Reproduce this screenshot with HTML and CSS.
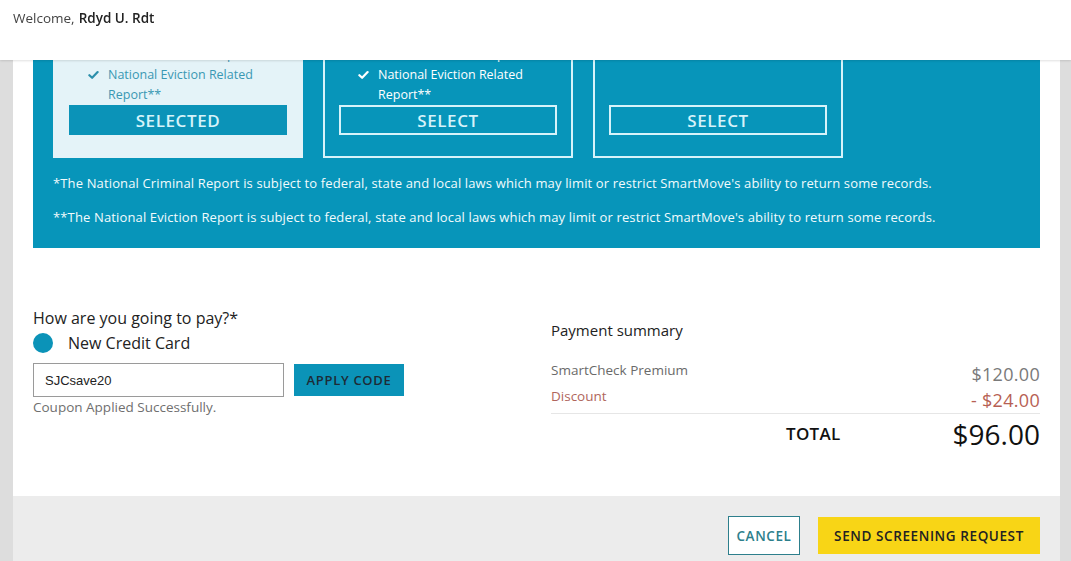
FILE: index.html
```html
<!DOCTYPE html>
<html lang="en">
<head>
<meta charset="utf-8">
<title>Screening request</title>
<link rel="stylesheet" href="styles.css">
</head>
<body>
<header class="topbar">
  <div class="welcome"><span>Welcome,</span><b>Rdyd U. Rdt</b></div>
</header>

<div class="page">
  <section class="plans">
    <div class="cards">
      <div class="card card-selected">
        <ul class="features">
          <li><svg class="check" viewBox="0 0 12 10"><path d="M1.5 5.2 L4.5 8 L10.5 1.8" /></svg><span>Credit Report &amp; Score</span></li>
          <li><svg class="check" viewBox="0 0 12 10"><path d="M1.5 5.2 L4.5 8 L10.5 1.8" /></svg><span>National Criminal Report*</span></li>
          <li><svg class="check" viewBox="0 0 12 10"><path d="M1.5 5.2 L4.5 8 L10.5 1.8" /></svg><span>National Eviction Related Report**</span></li>
        </ul>
        <button class="plan-btn plan-btn-on">SELECTED</button>
      </div>
      <div class="card">
        <ul class="features">
          <li><svg class="check" viewBox="0 0 12 10"><path d="M1.5 5.2 L4.5 8 L10.5 1.8" /></svg><span>Credit Report &amp; Score</span></li>
          <li><svg class="check" viewBox="0 0 12 10"><path d="M1.5 5.2 L4.5 8 L10.5 1.8" /></svg><span>National Criminal Report*</span></li>
          <li><svg class="check" viewBox="0 0 12 10"><path d="M1.5 5.2 L4.5 8 L10.5 1.8" /></svg><span>National Eviction Related Report**</span></li>
        </ul>
        <button class="plan-btn">SELECT</button>
      </div>
      <div class="card">
        <ul class="features">
          <li><svg class="check" viewBox="0 0 12 10"><path d="M1.5 5.2 L4.5 8 L10.5 1.8" /></svg><span>Credit Report &amp; Score</span></li>
        </ul>
        <button class="plan-btn">SELECT</button>
      </div>
    </div>
    <p class="note">*The National Criminal Report is subject to federal, state and local laws which may limit or restrict SmartMove's ability to return some records.</p>
    <p class="note">**The National Eviction Report is subject to federal, state and local laws which may limit or restrict SmartMove's ability to return some records.</p>
  </section>

  <section class="pay">
    <div class="pay-left">
      <h3 class="pay-title">How are you going to pay?*</h3>
      <div class="radio-row"><span class="radio"></span><span class="radio-label">New Credit Card</span></div>
      <div class="coupon-row">
        <input class="coupon-input" type="text" value="SJCsave20">
        <button class="apply-btn">APPLY CODE</button>
      </div>
      <div class="coupon-msg">Coupon Applied Successfully.</div>
    </div>
    <div class="summary">
      <h3 class="summary-title">Payment summary</h3>
      <div class="sum-row">
        <span class="sum-label">SmartCheck Premium</span>
        <span class="sum-val">$120.00</span>
      </div>
      <div class="sum-row discount">
        <span class="sum-label">Discount</span>
        <span class="sum-val">- $24.00</span>
      </div>
      <div class="total-row">
        <span class="total-label">TOTAL</span>
        <span class="total-val">$96.00</span>
      </div>
    </div>
  </section>

  <footer class="actions">
    <button class="cancel-btn">CANCEL</button>
    <button class="send-btn">SEND SCREENING REQUEST</button>
  </footer>
</div>
</body>
</html>
```

FILE: styles.css
```css
* { box-sizing: border-box; }

html, body {
  margin: 0;
  padding: 0;
  height: 100%;
  overflow: hidden;
}

body {
  background: #dddddd;
  font-family: "Open Sans", "Liberation Sans", sans-serif;
  color: #222;
}

.topbar {
  position: fixed;
  top: 0;
  left: 0;
  right: 0;
  height: 60px;
  background: #fff;
  z-index: 10;
  padding: 9px 13px;
  box-shadow: 0 1px 2px rgba(0,0,0,0.12);
}

.welcome {
  display: flex;
  gap: 4px;
  font-size: 13.5px;
  line-height: 19px;
  color: #444;
}
.welcome b {
  color: #222;
  font-weight: 600;
}

.page {
  margin: -16px 11px 0 13px;
  background: #fff;
  display: flex;
  flex-direction: column;
}

/* Plans panel */
.plans {
  margin: 0 20px;
  background: #0795ba;
  padding: 20px 20px 22px;
}

.cards {
  display: flex;
  gap: 20px;
}

.card {
  width: 250px;
  border: 2px solid #d6f3fa;
  padding: 19px 14px 21px;
  display: flex;
  flex-direction: column;
}

.card-selected {
  background: #e4f3f8;
  border-color: #e4f3f8;
}

.features {
  list-style: none;
  margin: 0;
  padding: 0 0 0 19px;
  flex: 1;
}

.features li {
  display: flex;
  align-items: flex-start;
  font-size: 12.5px;
  line-height: 20px;
  color: #fff;
}

.features li span {
  width: 165px;
}

.card-selected .features li {
  color: #3a98b3;
}

.check {
  width: 11px;
  height: 10px;
  margin: 5px 9px 0 0;
  flex: none;
  fill: none;
  stroke: #fff;
  stroke-width: 2.4;
  stroke-linecap: round;
  stroke-linejoin: round;
}
.card-selected .check { stroke: #2c8fab; }

.plan-btn {
  height: 30px;
  width: 100%;
  background: transparent;
  border: 2px solid #d6f3fa;
  color: #d6f3fa;
  font-family: "Open Sans", "Liberation Sans", sans-serif;
  font-weight: 600;
  font-size: 17px;
  padding: 0;
  letter-spacing: 0.6px;
}

.plan-btn-on {
  background: #0b93b8;
  border-color: #0b93b8;
}

.note {
  margin: 16px 0 0;
  font-size: 13px;
  line-height: 18px;
  color: #f2fbfd;
  letter-spacing: 0.14px;
}
.note + .note { margin-top: 16px; }

/* Payment */
.pay {
  display: grid;
  grid-template-columns: 1fr 489px;
  padding: 60px 20px 0;
  height: 248px;
}

.pay-title {
  margin: 0;
  font-size: 16px;
  line-height: 20px;
  font-weight: 500;
  color: #222;
}

.radio-row {
  display: flex;
  align-items: center;
  margin-top: 5px;
  height: 20px;
}

.radio {
  width: 20px;
  height: 20px;
  border-radius: 50%;
  background: #0b93b8;
  margin-right: 15px;
}

.radio-label {
  font-size: 16px;
  font-weight: 500;
  color: #222;
}

.coupon-row {
  display: flex;
  align-items: center;
  gap: 10px;
  margin-top: 10px;
}

.coupon-input {
  width: 251px;
  height: 34px;
  border: 1px solid #9a9a9a;
  padding: 0 11px;
  font-family: "Liberation Sans", Arial, sans-serif;
  font-size: 13px;
  color: #222;
  outline: none;
  margin: 0;
}

.apply-btn {
  width: 110px;
  height: 32px;
  border: none;
  background: #0b93b8;
  color: #1d2b36;
  font-family: "Open Sans", "Liberation Sans", sans-serif;
  font-weight: 600;
  font-size: 13px;
  letter-spacing: 0.7px;
  padding: 0;
}

.coupon-msg {
  margin-top: 2px;
  font-size: 13.5px;
  line-height: 16px;
  color: #6f6f6f;
}

.summary {
  padding-top: 12px;
}

.summary-title {
  margin: 0 0 20px;
  font-size: 15px;
  line-height: 20px;
  font-weight: 500;
  color: #222;
}

.sum-row {
  display: flex;
  justify-content: space-between;
  align-items: flex-end;
  height: 24px;
}
.sum-row + .sum-row { margin-top: 2px; }

.sum-label {
  font-size: 13.5px;
  color: #6a6a6a;
  position: relative;
  top: -5px;
}

.sum-val {
  font-size: 18px;
  line-height: 20px;
  color: #7a7a7a;
  letter-spacing: 0.3px;
}

.discount .sum-label { color: #b0665c; }
.discount .sum-val { color: #b75f54; }

.total-row {
  display: flex;
  justify-content: flex-end;
  align-items: center;
  border-top: 1px solid #e6e6e6;
  margin-top: 3px;
  padding-top: 0;
  height: 40px;
}

.total-label {
  font-size: 17px;
  font-weight: 600;
  color: #111;
  margin-right: 112px;
  letter-spacing: 0.3px;
}

.total-val {
  font-size: 28px;
  color: #111;
}

/* Footer */
.actions {
  background: #ececec;
  height: 65px;
  display: flex;
  justify-content: flex-end;
  align-items: flex-start;
  gap: 18px;
  padding: 20px 20px 0;
}

.cancel-btn {
  width: 72px;
  height: 39px;
  background: #fff;
  border: 1px solid #2d7f8c;
  color: #2d7f8c;
  font-family: "Open Sans", "Liberation Sans", sans-serif;
  font-weight: 600;
  font-size: 13.5px;
  padding: 0;
  letter-spacing: 0.6px;
}

.send-btn {
  width: 222px;
  height: 37px;
  margin-top: 1px;
  background: #f8d516;
  border: none;
  color: #222;
  font-family: "Open Sans", "Liberation Sans", sans-serif;
  font-weight: 600;
  font-size: 13.5px;
  padding: 0;
  letter-spacing: 0.6px;
}
```
